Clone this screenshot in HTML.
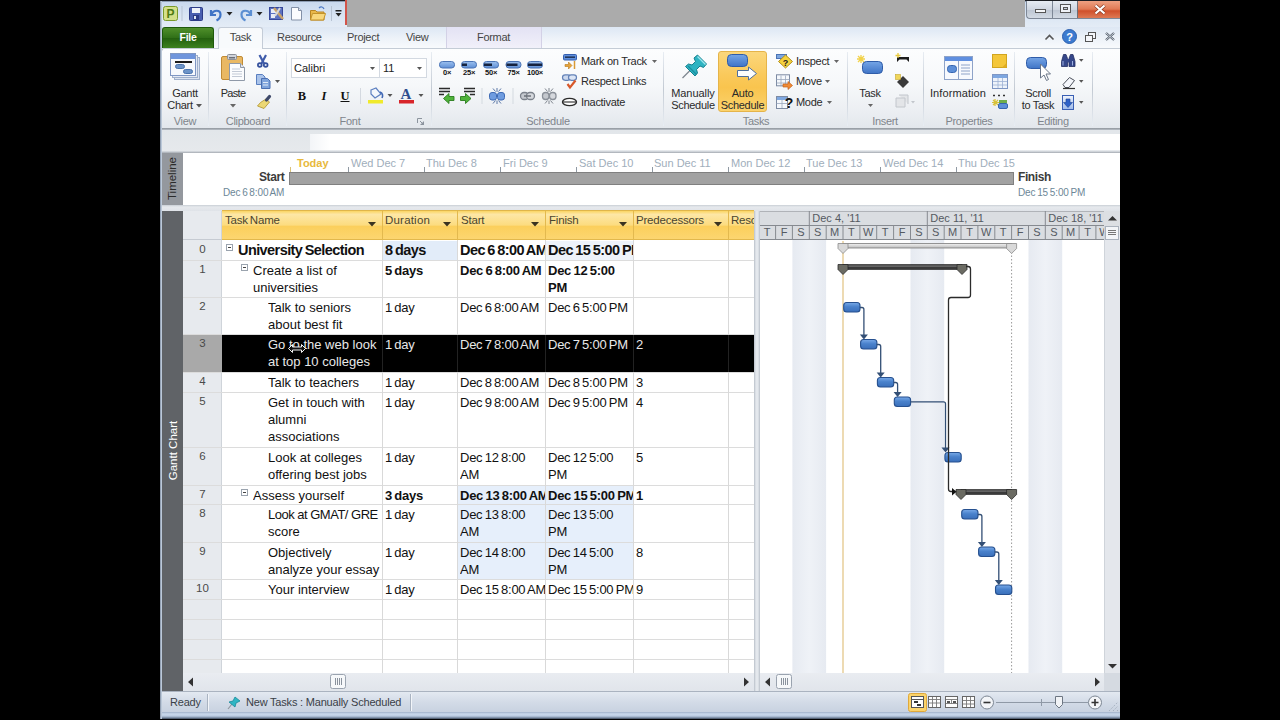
<!DOCTYPE html>
<html><head><meta charset="utf-8"><title>Microsoft Project</title>
<style>
*{box-sizing:border-box;margin:0;padding:0}
html,body{width:1280px;height:720px;overflow:hidden;background:#000}
body{position:relative;font-family:"Liberation Sans",sans-serif;font-size:11.5px;color:#222}
.a{position:absolute}
.t{position:absolute;white-space:nowrap;line-height:1}
/* ribbon text */
.rt{position:absolute;white-space:nowrap;line-height:13px;font-size:11px;letter-spacing:-0.3px;color:#2a2a2a;text-align:center}
.gl{position:absolute;white-space:nowrap;line-height:13px;font-size:11px;letter-spacing:-0.3px;color:#7f858c;text-align:center;top:115px}
.gs{position:absolute;top:52px;width:1px;height:74px;background:linear-gradient(#e8edf3,#c3cad3 50%,#e8edf3)}
/* grid */
.g{position:absolute;white-space:nowrap;font-size:13px;line-height:17px;color:#111;overflow:hidden}
.b{font-weight:bold}
.d{word-spacing:-1px;letter-spacing:-0.25px}
.d.b{letter-spacing:-0.25px}
.rn{position:absolute;left:183px;width:39px;text-align:center;font-size:11.5px;color:#4a4a4a;line-height:14px}
.hl{position:absolute;left:183px;width:571px;height:1px;background:#dcdcdc}
.vl{position:absolute;top:240px;width:1px;height:433px;background:#d9d9d9}
.tl{position:absolute;top:167px;width:1px;height:5px;background:#8f99a3}
.tt{position:absolute;top:158px;white-space:nowrap;line-height:1;font-size:11px;color:#a0aebb}
</style></head><body>
<!-- app frame -->
<div class="a" id="app" style="left:160px;top:1px;width:960px;height:717px;background:#dfe6ef"></div>
<!-- title bar -->
<div class="a" style="left:160px;top:0;width:960px;height:2px;background:linear-gradient(#1a1d22 1px,#8d9db3 1px)"></div>
<div class="a" style="left:160px;top:2px;width:960px;height:25px;background:linear-gradient(#c9d9ee,#dbe6f4 60%,#e4ecf6)"></div>
<div class="a" style="left:160px;top:27px;width:960px;height:22px;background:linear-gradient(#dde7f4,#eef3f9 55%,#f9fbfd)"></div>
<div class="a" style="left:347px;top:0;width:678px;height:27px;background:#ababab"></div>
<div class="a" style="left:345px;top:0;width:2px;height:25px;background:#d2554b"></div>
<!-- QAT icons -->
<svg class="a" style="left:160px;top:1.300px" width="190" height="25" viewBox="160 2 190 25">
  <rect x="163.5" y="7.5" width="14" height="14" rx="2" fill="#d4e08a" stroke="#7a9a2c"/>
  <text x="170.5" y="19" font-family="Liberation Sans,sans-serif" font-size="12" font-weight="bold" fill="#4d7a12" text-anchor="middle">P</text>
  <rect x="181.5" y="7" width="1" height="15" fill="#b8c4d4"/>
  <!-- save -->
  <rect x="189.500" y="8.500" width="13" height="13" rx="1" fill="#4a5fb0" stroke="#2c3b86"/>
  <rect x="192" y="9" width="8" height="5" fill="#eef2fa"/>
  <rect x="193" y="16" width="6" height="5" fill="#2c3b86"/><rect x="194" y="17" width="2" height="3" fill="#dfe6f5"/>
  <!-- undo -->
  <path d="M211 11 l0 5 l5 0 M211.500 15.500 c2 -5 9 -5 9 0 c0 3 -2 5 -4 6" fill="none" stroke="#3f74c6" stroke-width="2.200"/>
  <path d="M226.500 13 h6 l-3 3.500z" fill="#222"/>
  <!-- redo -->
  <path d="M251 11 l0 5 l-5 0 M250.500 15.500 c-2 -5 -9 -5 -9 0 c0 3 2 5 4 6" fill="none" stroke="#5c8fd2" stroke-width="2.200"/>
  <path d="M256.500 13 h6 l-3 3.500z" fill="#222"/>
  <!-- project info -->
  <rect x="269.500" y="8.500" width="13" height="12" fill="#5d72c0" stroke="#36479a"/>
  <rect x="271" y="10" width="5" height="4" fill="#e8ecf7"/><rect x="271" y="15" width="4" height="4" fill="#e8ecf7"/>
  <path d="M274 9 l9 11" stroke="#c9a36b" stroke-width="2.500"/><path d="M280 9 l-5 8" stroke="#d8d8d8" stroke-width="2"/>
  <!-- new -->
  <path d="M291.500 8.500 h7 l3 3 v9.500 h-10z" fill="#fbfcfe" stroke="#8391a8"/><path d="M298.500 8.500 v3 h3" fill="#dfe5ee" stroke="#8391a8"/>
  <!-- open -->
  <path d="M310.500 11.500 h5 l1.500 1.500 h7 v8 h-13.500z" fill="#e9b84a" stroke="#b98522"/>
  <path d="M312.500 14.500 h13 l-2 6.500 h-13z" fill="#f8d77c" stroke="#c3932c"/>
  <path d="M319 9 c2 -2 4 -1 5 1" fill="none" stroke="#4c79c4" stroke-width="1.300"/>
  <rect x="331" y="7" width="1" height="15" fill="#b8c4d4"/>
  <rect x="335.500" y="11" width="6" height="1.500" fill="#222"/><path d="M335.500 14 h6 l-3 3.500z" fill="#222"/>
</svg>
<!-- window controls -->
<div class="a" style="left:1026px;top:1px;width:94px;height:18px;border:1px solid #7d8796;border-top:none;border-right:none;border-radius:0 0 0 4px;background:linear-gradient(#e6ebf2,#cfd6e1 50%,#bcc5d2 51%,#d3dae4);overflow:hidden">
  <div class="a" style="left:25px;top:0;width:1px;height:18px;background:#7d8796"></div>
  <div class="a" style="left:50px;top:0;width:1px;height:18px;background:#6d6f78"></div>
  <div class="a" style="left:51px;top:0;width:43px;height:18px;background:linear-gradient(#eea182,#e07a55 45%,#d0502b 55%,#e0805a)"></div>
  <div class="a" style="left:8px;top:8px;width:11px;height:4px;border:1px solid #555;background:#f4f6f9"></div>
  <div class="a" style="left:33px;top:3px;width:11px;height:9px;border:1px solid #555;background:#eef1f6"></div>
  <div class="a" style="left:36px;top:6px;width:5px;height:3px;border:1px solid #555;background:#c9d0dc"></div>
  <svg class="a" style="left:67px;top:3px" width="12" height="11" viewBox="0 0 12 11"><path d="M1.500 1.500 l9 8 M10.500 1.500 l-9 8" stroke="#8a3a22" stroke-width="3.600"/><path d="M1.500 1.500 l9 8 M10.500 1.500 l-9 8" stroke="#fff" stroke-width="2.200"/></svg>
</div>

<!-- tabs -->
<div class="a" style="left:446px;top:27px;width:96px;height:22px;background:linear-gradient(#e3e2f4,#f2f1fa);border-left:1px solid #d3d1e6;border-right:1px solid #d3d1e6"></div>
<div class="a" style="left:162px;top:27px;width:52px;height:21px;border-radius:3px 3px 0 0;background:linear-gradient(#4f8f2a,#2f6f17 50%,#24600f 51%,#3d8220);border:1px solid #1f5a0c;border-bottom:none"></div>
<div class="t" style="left:162px;width:52px;top:32px;text-align:center;font-weight:bold;font-size:10.500px;letter-spacing:-0.3px;color:#fff">File</div>
<div class="a" style="left:218px;top:27px;width:45px;height:22px;border-radius:3px 3px 0 0;background:#f8fafc;border:1px solid #c4ccd7;border-bottom:none"></div>
<div class="t" style="left:218px;width:45px;top:32px;text-align:center;font-size:11px;letter-spacing:-0.3px;color:#454545">Task</div>
<div class="t" style="left:277px;top:32px;font-size:11px;letter-spacing:-0.3px;color:#454545">Resource</div>
<div class="t" style="left:347px;top:32px;font-size:11px;letter-spacing:-0.3px;color:#454545">Project</div>
<div class="t" style="left:406px;top:32px;font-size:11px;letter-spacing:-0.3px;color:#454545">View</div>
<div class="t" style="left:477px;top:32px;font-size:11px;letter-spacing:-0.3px;color:#454545">Format</div>
<!-- help icons -->
<svg class="a" style="left:1040px;top:26px" width="80" height="22" viewBox="1040 27 80 22">
  <path d="M1045.500 40.500 l4 -4 l4 4" fill="none" stroke="#555" stroke-width="1.600"/>
  <circle cx="1069.500" cy="37.500" r="7" fill="#3c7bd0" stroke="#2a5fae"/>
  <text x="1069.500" y="42" font-family="Liberation Sans,sans-serif" font-size="11" font-weight="bold" fill="#fff" text-anchor="middle">?</text>
  <rect x="1088.500" y="33.500" width="7" height="6" fill="#f4f6fa" stroke="#555"/><rect x="1085.500" y="36.500" width="7" height="6" fill="#f4f6fa" stroke="#555"/>
  <path d="M1106 34 l8 7 M1114 34 l-8 7" stroke="#4b5563" stroke-width="2.200"/><path d="M1106 34 l8 7 M1114 34 l-8 7" stroke="#eef2f7" stroke-width="0.800"/>
</svg>

<!-- ribbon body -->
<div class="a" style="left:161px;top:48px;width:959px;height:80px;background:linear-gradient(#fcfdfe,#f6f8fa 45%,#ebeef2 80%,#e3e7ec);border:1px solid #c4ccd6;border-left:1.500px solid #6f757d;border-right:none;border-bottom:none;border-radius:3px 0 0 0"></div>
<div class="a" style="left:219px;top:48px;width:43px;height:2px;background:#fafbfd"></div>
<div class="a" style="left:161px;top:128px;width:959px;height:2px;background:linear-gradient(#8f959c,#b9bfc7)"></div>
<!-- group separators -->
<div class="gs" style="left:208px"></div><div class="gs" style="left:286px"></div><div class="gs" style="left:431px"></div>
<div class="gs" style="left:663px"></div><div class="gs" style="left:847px"></div><div class="gs" style="left:923px"></div>
<div class="gs" style="left:1014px"></div><div class="gs" style="left:1092px"></div>
<!-- group labels -->
<div class="gl" style="left:165px;width:40px">View</div>
<div class="gl" style="left:212px;width:72px">Clipboard</div>
<div class="gl" style="left:320px;width:60px">Font</div>
<div class="gl" style="left:508px;width:80px">Schedule</div>
<div class="gl" style="left:726px;width:60px">Tasks</div>
<div class="gl" style="left:855px;width:60px">Insert</div>
<div class="gl" style="left:934px;width:70px">Properties</div>
<div class="gl" style="left:1023px;width:60px">Editing</div>
<svg class="a" style="left:417px;top:118px" width="8" height="8" viewBox="0 0 8 8"><path d="M0.500 5 v-4.500 h4.500" fill="none" stroke="#8c949e"/><path d="M3 7 h4 v-4z" fill="#8c949e"/><path d="M3 3 l3 3" stroke="#8c949e"/></svg>

<!-- View: Gantt Chart -->
<svg class="a" style="left:168px;top:52px" width="34" height="30" viewBox="0 0 34 30">
  <rect x="6.500" y="5.500" width="25" height="22" fill="#dbe3f0" stroke="#9fb0cc"/>
  <rect x="4.500" y="3.500" width="25" height="22" fill="#e4eaf4" stroke="#9fb0cc"/>
  <rect x="2.500" y="1.500" width="25" height="22" fill="#f6f9fd" stroke="#7f97c4"/>
  <rect x="3" y="2" width="24" height="5" fill="#6f95dc"/>
  <rect x="7" y="9" width="17" height="2" fill="#1c1c1c"/>
  <rect x="7.500" y="12.500" width="9" height="4" rx="2" fill="#6c94c9" stroke="#4a73ad"/>
  <rect x="15.500" y="17.500" width="9" height="4" rx="2" fill="#6c94c9" stroke="#4a73ad"/>
</svg>
<div class="rt" style="left:165px;width:40px;top:87px">Gantt</div>
<div class="rt" style="left:160px;width:40px;top:99px">Chart</div>
<svg class="a" style="left:196px;top:104px" width="6" height="4"><path d="M0 0 h6 l-3 3.500z" fill="#555"/></svg>

<!-- Clipboard -->
<svg class="a" style="left:219px;top:52px" width="30" height="32" viewBox="0 0 30 32">
  <rect x="2.500" y="4.500" width="21" height="23" rx="1.500" fill="#e9b863" stroke="#c08b36"/>
  <rect x="8.500" y="2.500" width="9" height="5" rx="1" fill="#cfd3da" stroke="#8c9099"/>
  <rect x="10" y="5" width="6" height="1.500" fill="#6b6f78"/>
  <path d="M10.500 11.500 h11 l4 4 v13 h-15z" fill="#fbfcfe" stroke="#8f99a8"/>
  <path d="M21.500 11.500 v4 h4" fill="#e1e6ee" stroke="#8f99a8"/>
  <path d="M13 17 h8 M13 19.500 h10 M13 22 h10 M13 24.500 h10" stroke="#c3cad6" stroke-width="1"/>
</svg>
<div class="rt" style="left:213px;width:40px;top:87px;letter-spacing:-0.7px">Paste</div>
<svg class="a" style="left:230px;top:104px" width="6" height="4"><path d="M0 0 h6 l-3 3.500z" fill="#666"/></svg>
<svg class="a" style="left:255px;top:53px" width="28" height="58" viewBox="255 53 28 58">
  <!-- cut -->
  <path d="M259.500 55 l4.500 8.500 M266 55 l-4.500 8.500" stroke="#3f5cab" stroke-width="2.200" fill="none"/>
  <circle cx="259.800" cy="65" r="1.900" fill="#dfe6f6" stroke="#34509c" stroke-width="1.700"/><circle cx="265.700" cy="65" r="1.900" fill="#dfe6f6" stroke="#34509c" stroke-width="1.700"/>
  <!-- copy -->
  <path d="M256.500 74.500 h6 l2.500 2.500 v7.500 h-8.500z" fill="#a9c3ea" stroke="#5a7fc0"/>
  <path d="M261.500 78.500 h6 l2.500 2.500 v7.500 h-8.500z" fill="#7fa4dc" stroke="#4a6fb2"/>
  <path d="M263 82.500 h5 M263 85 h5" stroke="#dfe9f8" stroke-width="1"/>
  <path d="M275 80 h5 l-2.500 3z" fill="#555"/>
  <!-- format painter -->
  <path d="M266 99 l3.500 3 l-5.500 6.500 l-6.500 -2.500 l3 -3.500z" fill="#ecd875" stroke="#b59a35" stroke-width="0.900"/>
  <path d="M266.500 100 l3 -3.500" stroke="#3f4a6a" stroke-width="3.200" stroke-linecap="round"/>
</svg>

<!-- Font group -->
<div class="a" style="left:291px;top:58px;width:89px;height:20px;background:#fff;border:1px solid #d3d9e1"></div>
<div class="a" style="left:379px;top:58px;width:48px;height:20px;background:#fff;border:1px solid #d3d9e1"></div>
<div class="t" style="left:294px;top:63px;font-size:11px;color:#222">Calibri</div>
<div class="t" style="left:383px;top:63px;font-size:11px;color:#222">11</div>
<svg class="a" style="left:370px;top:67px" width="6" height="4"><path d="M0 0 h5 l-2.500 3z" fill="#555"/></svg>
<svg class="a" style="left:417px;top:67px" width="6" height="4"><path d="M0 0 h5 l-2.500 3z" fill="#555"/></svg>
<div class="t" style="left:296px;top:89.500px;width:12px;text-align:center;font-family:'Liberation Serif',serif;font-weight:bold;font-size:12.500px;color:#111">B</div>
<div class="t" style="left:318px;top:89.500px;width:12px;text-align:center;font-family:'Liberation Serif',serif;font-weight:bold;font-style:italic;font-size:12.500px;color:#111">I</div>
<div class="t" style="left:339px;top:89.500px;width:12px;text-align:center;font-family:'Liberation Serif',serif;font-weight:bold;font-size:12.500px;color:#111;text-decoration:underline">U</div>
<div class="a" style="left:360px;top:88px;width:1px;height:16px;background:#d4d9e0"></div>
<svg class="a" style="left:366px;top:86px" width="62" height="20" viewBox="366 86 62 20">
  <path d="M371 90 l5 -2 l5 6 l-6 4 l-4 -4z" fill="#f4f7fc" stroke="#5c7fc0" stroke-width="1.200"/>
  <path d="M380 92 c3 1 3 4 2 6" fill="none" stroke="#3f66b4" stroke-width="1.600"/>
  <rect x="368" y="100" width="15" height="3.500" fill="#f0ea2c"/>
  <path d="M387.500 94 h5 l-2.500 3z" fill="#555"/>
  <text x="406" y="99" font-family="Liberation Serif,serif" font-size="15" font-weight="bold" fill="#2f4e8e" text-anchor="middle">A</text>
  <rect x="399" y="100" width="15" height="3.500" fill="#d8252a"/>
  <path d="M418.500 94 h5 l-2.500 3z" fill="#555"/>
</svg>
<!-- Schedule group -->
<svg class="a" style="left:436px;top:52px" width="124" height="58" viewBox="436 52 124 58">
  <defs><linearGradient id="pb" x1="0" y1="0" x2="0" y2="1"><stop offset="0" stop-color="#9cc0ee"/><stop offset="1" stop-color="#5f8fd6"/></linearGradient></defs>
  <g font-family="Liberation Sans,sans-serif" font-size="7.5" font-weight="bold" fill="#111" text-anchor="middle" letter-spacing="-0.2">
    <rect x="439.5" y="61.5" width="15" height="6.5" rx="3" fill="url(#pb)" stroke="#4a73b5"/>
    <text x="447" y="74.800">0×</text>
    <rect x="461.5" y="61.5" width="15" height="6.5" rx="3" fill="url(#pb)" stroke="#4a73b5"/><rect x="462" y="63.500" width="5" height="2.500" fill="#16233f"/>
    <text x="469" y="74.800">25×</text>
    <rect x="483.5" y="61.5" width="15" height="6.5" rx="3" fill="url(#pb)" stroke="#4a73b5"/><rect x="484" y="63.500" width="8" height="2.500" fill="#16233f"/>
    <text x="491" y="74.800">50×</text>
    <rect x="506" y="61.5" width="15" height="6.5" rx="3" fill="url(#pb)" stroke="#4a73b5"/><rect x="506.500" y="63.500" width="11" height="2.500" fill="#16233f"/>
    <text x="513.500" y="74.800">75×</text>
    <rect x="527.5" y="61.5" width="15" height="6.5" rx="3" fill="url(#pb)" stroke="#4a73b5"/><rect x="528" y="63.500" width="14" height="2.500" fill="#16233f"/>
    <text x="535" y="74.800">100×</text>
  </g>
  <!-- outdent -->
  <path d="M439 88.500 h11 M439 91.500 h11 M439 94.500 h5" stroke="#2b2b2b" stroke-width="1.300"/>
  <path d="M443.500 98.500 l5.500 -5 v3 h5 v4 h-5 v3z" fill="#4fb33a" stroke="#2a7d1e" stroke-width="0.900"/>
  <!-- indent -->
  <path d="M464 88.500 h11 M464 91.500 h11 M470 94.500 h5" stroke="#2b2b2b" stroke-width="1.300"/>
  <path d="M471 98.500 l-5.500 -5 v3 h-5 v4 h5 v3z" fill="#4fb33a" stroke="#2a7d1e" stroke-width="0.900"/>
  <rect x="481.500" y="88" width="1" height="16" fill="#d4d9e0"/>
  <!-- split -->
  <rect x="489.500" y="92.500" width="7" height="7.500" rx="2.500" fill="#6f9ce0" stroke="#3f6bb5"/><rect x="497.500" y="92.500" width="7" height="7.500" rx="2.500" fill="#6f9ce0" stroke="#3f6bb5"/>
  <path d="M497 88 v4 M493 88.500 l2.500 3 M501 88.500 l-2.500 3 M497 104 v-3.500 M493 103.500 l2.500 -3 M501 103.500 l-2.500 -3" stroke="#5b77a6" stroke-width="1"/>
  <rect x="512.500" y="88" width="1" height="16" fill="#d4d9e0"/>
  <!-- link -->
  <rect x="520.500" y="92.500" width="8" height="7" rx="3.500" fill="#c4c8ce" stroke="#7c828c" stroke-width="1.300"/><rect x="526.500" y="92.500" width="8" height="7" rx="3.500" fill="#d5d8dd" stroke="#7c828c" stroke-width="1.300"/>
  <path d="M524 96 h7" stroke="#6b7079" stroke-width="1.500"/>
  <!-- unlink -->
  <rect x="542.500" y="92.500" width="6.500" height="7" rx="3" fill="#c4c8ce" stroke="#8a9099" stroke-width="1.300"/><rect x="549.500" y="92.500" width="6.500" height="7" rx="3" fill="#d5d8dd" stroke="#8a9099" stroke-width="1.300"/>
  <path d="M549 88 v4 M545 88.500 l2.500 3 M553 88.500 l-2.500 3 M549 104 v-3.500 M545 103.500 l2.500 -3 M553 103.500 l-2.500 -3" stroke="#7f858e" stroke-width="1"/>
</svg>
<svg class="a" style="left:561px;top:52px" width="18" height="58" viewBox="561 52 18 58">
  <rect x="563.500" y="54.500" width="13" height="5.500" rx="1" fill="#5f8fdc" stroke="#345fb0"/><rect x="565" y="56.500" width="10" height="1.300" fill="#16233f"/>
  <path d="M565 64.500 h3.500 v-2.500 l3.500 3.500 l-3.500 3.500 v-2.500 h-3.500z" fill="#e8a33a" stroke="#b67718" stroke-width="0.600"/><path d="M574.500 61 v8" stroke="#d99a36" stroke-width="1.500"/>
  <rect x="562.500" y="74.800" width="8" height="5.500" rx="2.700" fill="#cbd8ee" stroke="#6483b8" stroke-width="1.200"/><rect x="568.500" y="74.800" width="8" height="5.500" rx="2.700" fill="#dbe5f5" stroke="#6483b8" stroke-width="1.200"/>
  <path d="M567.500 84 l2.500 3.500 l5.500 -7" fill="none" stroke="#d8582a" stroke-width="2.200"/>
  <ellipse cx="569.500" cy="102" rx="7" ry="3.600" fill="#fff" stroke="#2b2b2b" stroke-width="1.400"/><path d="M562.500 102 h14" stroke="#2b2b2b" stroke-width="1.100"/>
</svg>
<div class="rt" style="left:581px;top:55px;text-align:left">Mark on Track</div>
<svg class="a" style="left:652px;top:60px" width="6" height="4"><path d="M0 0 h5 l-2.500 3z" fill="#666"/></svg>
<div class="rt" style="left:581px;top:75px;text-align:left">Respect Links</div>
<div class="rt" style="left:581px;top:96px;text-align:left">Inactivate</div>

<!-- Tasks group -->
<svg class="a" style="left:678px;top:52px" width="32" height="32" viewBox="678 52 32 32">
  <path d="M682.500 78 l9 -9" stroke="#7f878f" stroke-width="1.300"/>
  <path d="M685.500 66.500 l3 -2.500 l3.500 1 l3.500 -3.500 l-1.500 -3.500 l3.500 -3 l9 9 l-3 3.500 l-3.500 -1.500 l-3.500 3.500 l1 3.500 l-2.500 3z" fill="#2eb3c2" stroke="#15808e" stroke-width="1"/>
  <path d="M697.500 56.500 l8 8" stroke="#9be6ec" stroke-width="1.300" fill="none"/>
  <path d="M688 66 l8.500 8.500" stroke="#1a8f9e" stroke-width="1.200" fill="none"/>
</svg>
<div class="rt" style="left:668px;width:50px;top:87px;letter-spacing:-0.05px">Manually</div>
<div class="rt" style="left:668px;width:50px;top:98.500px">Schedule</div>
<div class="a" style="left:718px;top:51px;width:49px;height:61px;border:1px solid #e5b44a;border-radius:3px;background:linear-gradient(#fbd77c,#fac95a 40%,#f9c44e 60%,#fbd36d)"></div>
<svg class="a" style="left:724px;top:52px" width="38" height="32" viewBox="724 52 38 32"><defs><linearGradient id="pb2" x1="0" y1="0" x2="0" y2="1"><stop offset="0" stop-color="#75a5e6"/><stop offset="1" stop-color="#3f74c6"/></linearGradient></defs>
  <rect x="727.500" y="54.500" width="20" height="12" rx="4" fill="url(#pb2)" stroke="#2f5ca8"/>
  <path d="M737.500 70.500 h11 v-3.500 l8 6.500 l-8 6.500 v-3.500 h-11z" fill="#fdfdfd" stroke="#4f6f9c"/>
</svg>
<div class="rt" style="left:718px;width:49px;top:87px">Auto</div>
<div class="rt" style="left:718px;width:49px;top:98.500px">Schedule</div>
<svg class="a" style="left:774px;top:52px" width="22" height="58" viewBox="774 52 22 58">
  <rect x="776.500" y="54.500" width="10" height="4" fill="#7ea7e0" stroke="#4a73b5"/>
  <path d="M785.500 55 l7 6.500 l-7 6.500 l-7 -6.500z" fill="#f5d13d" stroke="#b3901c"/>
  <text x="785.500" y="65.500" font-family="Liberation Sans,sans-serif" font-size="9" font-weight="bold" fill="#222" text-anchor="middle">?</text>
  <rect x="776.500" y="74.800" width="13" height="11" fill="#f5f8fc" stroke="#7d8ba3"/><path d="M776.500 79.500 h13 M776.500 83 h13 M781 75.500 v11 M785.500 75.500 v11" stroke="#9aa7bd" stroke-width="0.800"/>
  <path d="M783 84 h5 v-2.500 l4.500 4 l-4.500 4 v-2.500 h-5z" fill="#ef8a35" stroke="#c3601a" stroke-width="0.700"/>
  <rect x="776.500" y="96.500" width="11" height="12" fill="#f5f8fc" stroke="#7d8ba3"/><rect x="777" y="97" width="10" height="3" fill="#7ea7e0"/><path d="M776.500 103.500 h11 M782 100 v8" stroke="#9aa7bd" stroke-width="0.800"/>
  <text x="789" y="108" font-family="Liberation Sans,sans-serif" font-size="14" font-weight="bold" fill="#111" text-anchor="middle">?</text>
</svg>
<div class="rt" style="left:796px;top:55px;text-align:left">Inspect</div>
<svg class="a" style="left:834px;top:60px" width="6" height="4"><path d="M0 0 h5 l-2.500 3z" fill="#666"/></svg>
<div class="rt" style="left:796px;top:75px;text-align:left">Move</div>
<svg class="a" style="left:825px;top:80px" width="6" height="4"><path d="M0 0 h5 l-2.500 3z" fill="#666"/></svg>
<div class="rt" style="left:796px;top:96px;text-align:left">Mode</div>
<svg class="a" style="left:827px;top:101px" width="6" height="4"><path d="M0 0 h5 l-2.500 3z" fill="#666"/></svg>

<!-- Insert group -->
<svg class="a" style="left:854px;top:52px" width="64" height="58" viewBox="854 52 64 58">
  <rect x="862.500" y="61.500" width="20" height="12" rx="4" fill="url(#pb2)" stroke="#2f5ca8"/>
  <path d="M861 55 v8 M857 59 h8 M858 56 l6 6 M864 56 l-6 6" stroke="#f2d24a" stroke-width="1.300"/>
  <!-- summary -->
  <path d="M897 57 h12 v5 l-2.500 -2.500 h-7 l-2.500 2.500z" fill="#1c1c1c"/><path d="M898 53 v5 M895.500 55.500 h5" stroke="#e8c93c" stroke-width="1.300"/>
  <!-- milestone -->
  <path d="M903 76 l6 6 l-6 6 l-6 -6z" fill="#3a3a3a"/><rect x="895.500" y="74.500" width="5" height="5" fill="#f0d65a" stroke="#c6a82e" stroke-width="0.600"/>
  <!-- deliverable -->
  <path d="M896 98 h9 v9 h-9z M899 95 h9 v9" fill="#e3e5e8" stroke="#c2c6cc"/>
  <path d="M911 101 h4 l-2 2.500z" fill="#c2c6cc"/>
</svg>
<div class="rt" style="left:850px;width:40px;top:87px">Task</div>
<svg class="a" style="left:868px;top:104px" width="6" height="4"><path d="M0 0 h5 l-2.500 3z" fill="#666"/></svg>

<!-- Properties group -->
<svg class="a" style="left:940px;top:52px" width="72" height="60" viewBox="940 52 72 60">
  <rect x="944.500" y="56.500" width="28" height="23" fill="#f7f9fd" stroke="#8ea3c8"/>
  <rect x="945" y="57" width="27" height="4" fill="#5f8fe0"/>
  <rect x="947.500" y="65.500" width="9" height="7" rx="3" fill="#5d8fd8" stroke="#3565b0"/>
  <path d="M958.500 61 v18" stroke="#8ea3c8"/><path d="M961 65 h9 M961 68 h9 M961 71 h9 M961 74 h9" stroke="#8ea3c8" stroke-width="1"/>
  <!-- notes -->
  <rect x="992.500" y="54.500" width="14" height="13" fill="#f4c73a" stroke="#d1a520"/><path d="M1002 67.500 l4.500 -4.500 v4.500z" fill="#e0ae22"/>
  <!-- details -->
  <rect x="992.500" y="74.500" width="15" height="14" fill="#eef3fa" stroke="#7f97c4"/><rect x="993" y="75" width="14" height="3" fill="#7ea7e0"/>
  <path d="M993 81.500 h14 M993 85 h14 M998 78 v10 M1002.500 78 v10" stroke="#9db1d4" stroke-width="0.800"/>
  <!-- add to timeline -->
  <path d="M993 95.500 h2 M998 95.500 h2 M1003 95.500 h2" stroke="#333" stroke-width="1.600"/>
  <path d="M995 99 v7 M992 102.500 h7 M993 100 l5 5 M998 100 l-5 5" stroke="#d8c23a" stroke-width="1.200"/>
  <rect x="998.500" y="103.500" width="9" height="5" rx="1.500" fill="#5d8fd8" stroke="#3565b0"/>
  <path d="M999 100 h8 v3 h-8z" fill="#6fae4a"/>
</svg>
<div class="rt" style="left:928px;width:60px;top:87px;letter-spacing:0.1px">Information</div>

<!-- Editing group -->
<svg class="a" style="left:1020px;top:52px" width="70" height="60" viewBox="1020 52 70 60">
  <rect x="1026.500" y="57.500" width="20" height="11" rx="4" fill="url(#pb2)" stroke="#2f5ca8"/>
  <path d="M1040.500 64 v14 l3.500 -3 l2.500 5.500 l2 -1 l-2.500 -5.500 h4.500z" fill="#fff" stroke="#6a7688" stroke-width="1"/>
  <!-- binoculars -->
  <path d="M1063.500 54.500 h2.500 l1.500 4 v8 h-6 v-5z M1070.500 54.500 h2.500 l2 7 v5 h-6 v-8z" fill="#35478a" stroke="#232f63" stroke-width="0.800"/>
  <rect x="1066.500" y="59" width="3" height="3.500" fill="#35478a"/>
  <path d="M1063 61 v4.500 M1072.500 61 v4.500" stroke="#9fb0e0" stroke-width="1"/>
  <path d="M1079 59 h4.500 l-2.250 2.800z" fill="#555"/>
  <!-- eraser -->
  <path d="M1063 84.500 l6.500 -7 l5 3 l-5.500 7 h-4z" fill="#f4f6fb" stroke="#4a4f5a" stroke-width="1"/><path d="M1063 88.500 h12" stroke="#333" stroke-width="1.200"/>
  <path d="M1079 80 h4.500 l-2.250 2.800z" fill="#555"/>
  <!-- fill down -->
  <rect x="1062.500" y="95.500" width="11" height="14" fill="url(#fd)" stroke="#3a5fb4"/>
  <path d="M1066 99 h4 v3.500 h2.500 l-4.500 5 l-4.500 -5 h2.500z" fill="#2f62c8" stroke="#1f4596" stroke-width="0.600"/>
  <path d="M1079 101 h4.500 l-2.250 2.800z" fill="#555"/>
  <defs><linearGradient id="fd" x1="0" y1="0" x2="0" y2="1"><stop offset="0" stop-color="#f2f6fd"/><stop offset="1" stop-color="#9db9ea"/></linearGradient></defs>
</svg>
<div class="rt" style="left:1017px;width:42px;top:87px">Scroll</div>
<div class="rt" style="left:1017px;width:42px;top:98.500px">to Task</div>

<!-- entry bar strip -->
<div class="a" style="left:161px;top:130px;width:959px;height:22px;background:linear-gradient(#e2e6ea,#e6e9ec);border-left:1.500px solid #6f757d"></div>
<div class="a" style="left:310px;top:134px;width:810px;height:16px;background:linear-gradient(90deg,#f3f5f8,#fff 20px)"></div>
<div class="a" style="left:160px;top:151px;width:960px;height:2px;background:linear-gradient(#dfe3e8,#a4a9b0)"></div>
<!-- timeline -->
<div class="a" style="left:183px;top:153px;width:937px;height:52px;background:#fff"></div>
<div class="a" style="left:162px;top:153px;width:21px;height:52px;background:#94989e"></div>
<div class="t" style="left:147px;top:172px;width:52px;height:13px;text-align:center;font-size:11.500px;color:#2b2b2b;transform:rotate(-90deg)">Timeline</div>
<div class="a" style="left:160px;top:205px;width:960px;height:6px;background:linear-gradient(#c9ced5,#e6e9ed 2px,#dfe3e8)"></div>
<div class="t" style="left:297px;top:158px;font-size:11px;font-weight:bold;color:#e8b93c">Today</div>
<div class="a" style="left:290px;top:167px;width:1px;height:5px;background:#d9c27a"></div>
<div class="t" style="left:259px;top:171px;font-size:12px;font-weight:bold;color:#3c3c3c;letter-spacing:-0.4px">Start</div>
<div class="t" style="left:1018px;top:171px;font-size:12px;font-weight:bold;color:#3c3c3c;letter-spacing:-0.4px">Finish</div>
<div class="t" style="left:223px;top:188px;font-size:10px;word-spacing:-1px;letter-spacing:-0.1px;color:#6d8797">Dec 6 8:00 AM</div>
<div class="t" style="left:1018px;top:188px;font-size:10px;word-spacing:-1px;letter-spacing:-0.1px;color:#6d8797">Dec 15 5:00 PM</div>
<div class="a" style="left:289px;top:172px;width:725px;height:13px;background:#a2a2a2;border:1px solid #808080"></div>
<div class="tl" style="left:348px"></div><div class="tt" style="left:351px">Wed Dec 7</div>
<div class="tl" style="left:424px"></div><div class="tt" style="left:426px">Thu Dec 8</div>
<div class="tl" style="left:500px"></div><div class="tt" style="left:503px">Fri Dec 9</div>
<div class="tl" style="left:576px"></div><div class="tt" style="left:579px">Sat Dec 10</div>
<div class="tl" style="left:652px"></div><div class="tt" style="left:654px">Sun Dec 11</div>
<div class="tl" style="left:728px"></div><div class="tt" style="left:731px">Mon Dec 12</div>
<div class="tl" style="left:804px"></div><div class="tt" style="left:806px">Tue Dec 13</div>
<div class="tl" style="left:880px"></div><div class="tt" style="left:883px">Wed Dec 14</div>
<div class="tl" style="left:956px"></div><div class="tt" style="left:958px">Thu Dec 15</div>

<!-- grid -->
<div class="a" style="left:162px;top:211px;width:21px;height:480px;background:#606367"></div>
<div class="t" style="left:133.500px;top:444px;width:80px;height:13px;text-align:center;font-size:11.500px;color:#fff;transform:rotate(-90deg)">Gantt Chart</div>
<div class="a" style="left:184px;top:211px;width:570px;height:462px;background:#fff"></div>
<div class="a" style="left:183px;top:211px;width:39px;height:462px;background:#e7eaee;border-right:1px solid #cfd4da"></div>
<div class="a" style="left:222px;top:210px;width:532px;height:30px;background:linear-gradient(#fbd563,#fde7a6 12%,#fcdc80 50%,#fbcf5c 55%,#fcd670);border-top:1px solid #e0b64a;border-bottom:1px solid #e2b84c"></div>
<div class="t" style="left:225px;top:214.500px;font-size:11.5px;letter-spacing:-0.2px;word-spacing:-1px;color:#4a4530">Task Name</div>
<div class="t" style="left:385px;top:214.500px;font-size:11.5px;letter-spacing:0.2px;word-spacing:-1px;color:#4a4530">Duration</div>
<div class="t" style="left:461px;top:214.500px;font-size:11.5px;letter-spacing:-0.2px;word-spacing:-1px;color:#4a4530">Start</div>
<div class="t" style="left:549px;top:214.500px;font-size:11.5px;letter-spacing:-0.2px;word-spacing:-1px;color:#4a4530">Finish</div>
<div class="t" style="left:636px;top:214.500px;font-size:11.5px;letter-spacing:-0.2px;word-spacing:-1px;color:#4a4530">Predecessors</div>
<div class="t" style="left:731px;top:214.500px;font-size:11.5px;letter-spacing:-0.2px;word-spacing:-1px;color:#4a4530">Reso</div>
<svg class="a" style="left:368px;top:222px" width="8" height="5"><path d="M0 0 h8 l-4 4.500z" fill="#3a3320"/></svg>
<svg class="a" style="left:443px;top:222px" width="8" height="5"><path d="M0 0 h8 l-4 4.500z" fill="#3a3320"/></svg>
<svg class="a" style="left:531px;top:222px" width="8" height="5"><path d="M0 0 h8 l-4 4.500z" fill="#3a3320"/></svg>
<svg class="a" style="left:619px;top:222px" width="8" height="5"><path d="M0 0 h8 l-4 4.500z" fill="#3a3320"/></svg>
<svg class="a" style="left:714px;top:222px" width="8" height="5"><path d="M0 0 h8 l-4 4.500z" fill="#3a3320"/></svg>
<div class="a" style="left:382px;top:211px;width:1px;height:29px;background:#e3b94e"></div>
<div class="a" style="left:457px;top:211px;width:1px;height:29px;background:#e3b94e"></div>
<div class="a" style="left:545px;top:211px;width:1px;height:29px;background:#e3b94e"></div>
<div class="a" style="left:633px;top:211px;width:1px;height:29px;background:#e3b94e"></div>
<div class="a" style="left:728px;top:211px;width:1px;height:29px;background:#e3b94e"></div>
<div class="a" style="left:183px;top:239px;width:39px;height:1px;background:#c6cbd2"></div>
<div class="a" style="left:383px;top:241px;width:74px;height:19px;background:#e2ecf9"></div>
<div class="a" style="left:546px;top:241px;width:87px;height:19px;background:#eef3fa"></div>
<div class="a" style="left:458px;top:486px;width:87px;height:93px;background:#e6effb"></div>
<div class="a" style="left:546px;top:486px;width:87px;height:93px;background:#e6effb"></div>
<div class="a" style="left:183px;top:334px;width:39px;height:39px;background:#a9a9a9"></div>
<div class="a" style="left:222px;top:334px;width:532px;height:39px;background:#000"></div>
<div class="hl" style="top:260px"></div>
<div class="hl" style="top:297px"></div>
<div class="hl" style="top:334px"></div>
<div class="hl" style="top:372px"></div>
<div class="hl" style="top:392px"></div>
<div class="hl" style="top:447px"></div>
<div class="hl" style="top:485px"></div>
<div class="hl" style="top:504px"></div>
<div class="hl" style="top:542px"></div>
<div class="hl" style="top:579px"></div>
<div class="hl" style="top:599px"></div>
<div class="hl" style="top:619px"></div>
<div class="hl" style="top:639px"></div>
<div class="hl" style="top:659px"></div>
<div class="vl" style="left:382px"></div>
<div class="vl" style="left:457px"></div>
<div class="vl" style="left:545px"></div>
<div class="vl" style="left:633px"></div>
<div class="vl" style="left:728px"></div>
<div class="a" style="left:382px;top:335px;width:1px;height:37px;background:#222"></div><div class="a" style="left:457px;top:335px;width:1px;height:37px;background:#222"></div><div class="a" style="left:545px;top:335px;width:1px;height:37px;background:#222"></div><div class="a" style="left:633px;top:335px;width:1px;height:37px;background:#222"></div><div class="a" style="left:728px;top:335px;width:1px;height:37px;background:#222"></div>
<div class="rn" style="top:242px">0</div>
<div class="a" style="left:226px;top:244px;width:7px;height:7px;border:1px solid #9aa3ae;background:#fff"><div class="a" style="left:1px;top:2px;width:3px;height:1px;background:#444"></div></div>
<div class="g b" style="left:238px;top:242px;width:144px;font-size:14.5px;letter-spacing:-0.58px;word-spacing:-1px;">University Selection</div>
<div class="g d b" style="left:385px;top:242px;width:72px;font-size:14.5px;letter-spacing:-0.58px;word-spacing:-1px;">8 days</div>
<div class="g d b" style="left:460px;top:242px;width:85px;font-size:14.5px;letter-spacing:-0.58px;word-spacing:-1px;">Dec 6 8:00 AM</div>
<div class="g d b" style="left:548px;top:242px;width:85px;font-size:14.5px;letter-spacing:-0.58px;word-spacing:-1px;">Dec 15 5:00 PM</div>
<div class="rn" style="top:262px">1</div>
<div class="a" style="left:241px;top:264px;width:7px;height:7px;border:1px solid #9aa3ae;background:#fff"><div class="a" style="left:1px;top:2px;width:3px;height:1px;background:#444"></div></div>
<div class="g" style="left:253px;top:262px;width:129px;">Create a list of<br>universities</div>
<div class="g d b" style="left:385px;top:262px;width:72px;">5 days</div>
<div class="g d b" style="left:460px;top:262px;width:85px;">Dec 6 8:00 AM</div>
<div class="g d b" style="left:548px;top:262px;width:85px;">Dec 12 5:00<br>PM</div>
<div class="rn" style="top:299px">2</div>
<div class="g" style="left:268px;top:299px;width:114px;">Talk to seniors<br>about best fit</div>
<div class="g d" style="left:385px;top:299px;width:72px;">1 day</div>
<div class="g d" style="left:460px;top:299px;width:85px;">Dec 6 8:00 AM</div>
<div class="g d" style="left:548px;top:299px;width:85px;">Dec 6 5:00 PM</div>
<div class="rn" style="top:336px">3</div>
<div class="g" style="left:268px;top:336px;width:114px;color:#e8e8e8;">Go to the web look<br>at top 10 colleges</div>
<div class="g d" style="left:385px;top:336px;width:72px;color:#e8e8e8;">1 day</div>
<div class="g d" style="left:460px;top:336px;width:85px;color:#e8e8e8;">Dec 7 8:00 AM</div>
<div class="g d" style="left:548px;top:336px;width:85px;color:#e8e8e8;">Dec 7 5:00 PM</div>
<div class="g" style="left:636px;top:336px;width:90px;color:#e8e8e8;">2</div>
<div class="rn" style="top:374px">4</div>
<div class="g" style="left:268px;top:374px;width:114px;">Talk to teachers</div>
<div class="g d" style="left:385px;top:374px;width:72px;">1 day</div>
<div class="g d" style="left:460px;top:374px;width:85px;">Dec 8 8:00 AM</div>
<div class="g d" style="left:548px;top:374px;width:85px;">Dec 8 5:00 PM</div>
<div class="g" style="left:636px;top:374px;width:90px;">3</div>
<div class="rn" style="top:394px">5</div>
<div class="g" style="left:268px;top:394px;width:114px;">Get in touch with<br>alumni<br>associations</div>
<div class="g d" style="left:385px;top:394px;width:72px;">1 day</div>
<div class="g d" style="left:460px;top:394px;width:85px;">Dec 9 8:00 AM</div>
<div class="g d" style="left:548px;top:394px;width:85px;">Dec 9 5:00 PM</div>
<div class="g" style="left:636px;top:394px;width:90px;">4</div>
<div class="rn" style="top:449px">6</div>
<div class="g" style="left:268px;top:449px;width:114px;">Look at colleges<br>offering best jobs</div>
<div class="g d" style="left:385px;top:449px;width:72px;">1 day</div>
<div class="g d" style="left:460px;top:449px;width:85px;">Dec 12 8:00<br>AM</div>
<div class="g d" style="left:548px;top:449px;width:85px;">Dec 12 5:00<br>PM</div>
<div class="g" style="left:636px;top:449px;width:90px;">5</div>
<div class="rn" style="top:487px">7</div>
<div class="a" style="left:241px;top:489px;width:7px;height:7px;border:1px solid #9aa3ae;background:#fff"><div class="a" style="left:1px;top:2px;width:3px;height:1px;background:#444"></div></div>
<div class="g" style="left:253px;top:487px;width:129px;">Assess yourself</div>
<div class="g d b" style="left:385px;top:487px;width:72px;">3 days</div>
<div class="g d b" style="left:460px;top:487px;width:85px;">Dec 13 8:00 AM</div>
<div class="g d b" style="left:548px;top:487px;width:85px;">Dec 15 5:00 PM</div>
<div class="g b" style="left:636px;top:487px;width:90px;">1</div>
<div class="rn" style="top:506px">8</div>
<div class="g" style="left:268px;top:506px;width:114px;"><span style="letter-spacing:-0.5px">Look at GMAT/ GRE</span><br>score</div>
<div class="g d" style="left:385px;top:506px;width:72px;">1 day</div>
<div class="g d" style="left:460px;top:506px;width:85px;">Dec 13 8:00<br>AM</div>
<div class="g d" style="left:548px;top:506px;width:85px;">Dec 13 5:00<br>PM</div>
<div class="rn" style="top:544px">9</div>
<div class="g" style="left:268px;top:544px;width:114px;">Objectively<br>analyze your essay</div>
<div class="g d" style="left:385px;top:544px;width:72px;">1 day</div>
<div class="g d" style="left:460px;top:544px;width:85px;">Dec 14 8:00<br>AM</div>
<div class="g d" style="left:548px;top:544px;width:85px;">Dec 14 5:00<br>PM</div>
<div class="g" style="left:636px;top:544px;width:90px;">8</div>
<div class="rn" style="top:581px">10</div>
<div class="g" style="left:268px;top:581px;width:114px;">Your interview</div>
<div class="g d" style="left:385px;top:581px;width:72px;">1 day</div>
<div class="g d" style="left:460px;top:581px;width:85px;">Dec 15 8:00 AM</div>
<div class="g d" style="left:548px;top:581px;width:85px;">Dec 15 5:00 PM</div>
<div class="g" style="left:636px;top:581px;width:90px;">9</div>
<svg class="a" style="left:287px;top:343px" width="20" height="11" viewBox="0 0 20 11"><path d="M1.500 5.500 l4 -4 v2.500 h9 v-2.500 l4 4 l-4 4 v-2.500 h-9 v2.500z" fill="#111" stroke="#f2f2f2" stroke-width="1"/></svg>
<div class="a" style="left:754px;top:211px;width:6px;height:480px;background:linear-gradient(90deg,#b9c0c9,#e4e8ed 2px,#e4e8ed 4px,#b9c0c9)"></div>

<!-- gantt chart -->
<svg class="a" style="left:760px;top:211px" width="344" height="462" viewBox="760 211 344 462" font-family="Liberation Sans,sans-serif">
<defs><linearGradient id="bb" x1="0" y1="0" x2="0" y2="1"><stop offset="0" stop-color="#79aae8"/><stop offset="0.45" stop-color="#4a82cc"/><stop offset="1" stop-color="#3a6fba"/></linearGradient>
<linearGradient id="we" x1="0" y1="0" x2="1" y2="0"><stop offset="0" stop-color="#e6eaf1"/><stop offset="0.5" stop-color="#eff2f7"/><stop offset="1" stop-color="#e6eaf1"/></linearGradient>
<linearGradient id="pg" x1="0" y1="0" x2="0" y2="1"><stop offset="0" stop-color="#f2f2f2"/><stop offset="1" stop-color="#bdbdbd"/></linearGradient></defs>
<rect x="760" y="211" width="346" height="462" fill="#fff"/>
<rect x="792.4" y="239.500" width="33.7" height="433.500" fill="url(#we)"/>
<rect x="910.5" y="239.500" width="33.7" height="433.500" fill="url(#we)"/>
<rect x="1028.5" y="239.500" width="33.7" height="433.500" fill="url(#we)"/>
<rect x="760" y="211" width="346" height="28.500" fill="#dadde1"/>
<path d="M760 211 h346 M760 225.500 h346 M760 239.500 h346" stroke="#868a90" stroke-width="1" fill="none"/>
<path d="M809.3 211 v14" stroke="#868a90"/>
<text x="812.3" y="222.300" font-size="11" fill="#555a61">Dec 4, '11</text>
<path d="M927.3 211 v14" stroke="#868a90"/>
<text x="930.3" y="222.300" font-size="11" fill="#555a61">Dec 11, '11</text>
<path d="M1045.3 211 v14" stroke="#868a90"/>
<text x="1048.3" y="222.300" font-size="11" fill="#555a61">Dec 18, '11</text>
<text x="767.1" y="236.300" font-size="11" fill="#555a61" text-anchor="middle">T</text>
<path d="M775.6 226 v13" stroke="#868a90"/>
<text x="784.0" y="236.300" font-size="11" fill="#555a61" text-anchor="middle">F</text>
<path d="M792.4 226 v13" stroke="#868a90"/>
<text x="800.9" y="236.300" font-size="11" fill="#555a61" text-anchor="middle">S</text>
<path d="M809.3 226 v13" stroke="#868a90"/>
<text x="817.7" y="236.300" font-size="11" fill="#555a61" text-anchor="middle">S</text>
<path d="M826.2 226 v13" stroke="#868a90"/>
<text x="834.6" y="236.300" font-size="11" fill="#555a61" text-anchor="middle">M</text>
<path d="M843.0 226 v13" stroke="#868a90"/>
<text x="851.4" y="236.300" font-size="11" fill="#555a61" text-anchor="middle">T</text>
<path d="M859.9 226 v13" stroke="#868a90"/>
<text x="868.3" y="236.300" font-size="11" fill="#555a61" text-anchor="middle">W</text>
<path d="M876.7 226 v13" stroke="#868a90"/>
<text x="885.2" y="236.300" font-size="11" fill="#555a61" text-anchor="middle">T</text>
<path d="M893.6 226 v13" stroke="#868a90"/>
<text x="902.0" y="236.300" font-size="11" fill="#555a61" text-anchor="middle">F</text>
<path d="M910.5 226 v13" stroke="#868a90"/>
<text x="918.9" y="236.300" font-size="11" fill="#555a61" text-anchor="middle">S</text>
<path d="M927.3 226 v13" stroke="#868a90"/>
<text x="935.7" y="236.300" font-size="11" fill="#555a61" text-anchor="middle">S</text>
<path d="M944.2 226 v13" stroke="#868a90"/>
<text x="952.6" y="236.300" font-size="11" fill="#555a61" text-anchor="middle">M</text>
<path d="M961.0 226 v13" stroke="#868a90"/>
<text x="969.5" y="236.300" font-size="11" fill="#555a61" text-anchor="middle">T</text>
<path d="M977.9 226 v13" stroke="#868a90"/>
<text x="986.3" y="236.300" font-size="11" fill="#555a61" text-anchor="middle">W</text>
<path d="M994.8 226 v13" stroke="#868a90"/>
<text x="1003.2" y="236.300" font-size="11" fill="#555a61" text-anchor="middle">T</text>
<path d="M1011.6 226 v13" stroke="#868a90"/>
<text x="1020.0" y="236.300" font-size="11" fill="#555a61" text-anchor="middle">F</text>
<path d="M1028.5 226 v13" stroke="#868a90"/>
<text x="1036.9" y="236.300" font-size="11" fill="#555a61" text-anchor="middle">S</text>
<path d="M1045.3 226 v13" stroke="#868a90"/>
<text x="1053.8" y="236.300" font-size="11" fill="#555a61" text-anchor="middle">S</text>
<path d="M1062.2 226 v13" stroke="#868a90"/>
<text x="1070.6" y="236.300" font-size="11" fill="#555a61" text-anchor="middle">M</text>
<path d="M1079.1 226 v13" stroke="#868a90"/>
<text x="1087.5" y="236.300" font-size="11" fill="#555a61" text-anchor="middle">T</text>
<path d="M1095.9 226 v13" stroke="#868a90"/>
<text x="1104.4" y="236.300" font-size="11" fill="#555a61" text-anchor="middle">W</text>
<path d="M843.0 241 v432" stroke="#e3c78a" stroke-width="1.300"/>
<path d="M1011.6 252 v421" stroke="#9a9a9a" stroke-width="1" stroke-dasharray="1.500 2"/>
<rect x="843.0" y="243.500" width="168.6" height="4.500" fill="url(#pg)" stroke="#7c7c7c" stroke-width="0.800"/>
<path d="M838.0 243.500 h10 v5 l-5 5 l-5 -5z" fill="#d9d9d9" stroke="#8a8a8a" stroke-width="0.800"/>
<path d="M1006.6 243.500 h10 v5 l-5 5 l-5 -5z" fill="#d9d9d9" stroke="#8a8a8a" stroke-width="0.800"/>
<rect x="843.0" y="264.5" width="119.0" height="5" fill="#3a3a3a" stroke="#1f1f1f" stroke-width="0.600"/>
<rect x="843.0" y="265.5" width="119.0" height="1.200" fill="#777"/>
<path d="M838.0 264.5 h10 v5 l-5 5 l-5 -5z" fill="#6b6b63" stroke="#2a2a2a" stroke-width="0.800"/>
<path d="M957.0 264.5 h10 v5 l-5 5 l-5 -5z" fill="#6b6b63" stroke="#2a2a2a" stroke-width="0.800"/>
<rect x="961.0" y="489.5" width="50.6" height="5" fill="#3a3a3a" stroke="#1f1f1f" stroke-width="0.600"/>
<rect x="961.0" y="490.5" width="50.6" height="1.200" fill="#777"/>
<path d="M956.0 489.5 h10 v5 l-5 5 l-5 -5z" fill="#6b6b63" stroke="#2a2a2a" stroke-width="0.800"/>
<path d="M1006.6 489.5 h10 v5 l-5 5 l-5 -5z" fill="#6b6b63" stroke="#2a2a2a" stroke-width="0.800"/>
<rect x="843.7" y="302.5" width="16.300" height="9.500" rx="3" fill="url(#bb)" stroke="#26508f" stroke-width="1.100"/>
<rect x="860.6" y="339.5" width="16.300" height="9.500" rx="3" fill="url(#bb)" stroke="#26508f" stroke-width="1.100"/>
<rect x="877.4" y="377.5" width="16.300" height="9.500" rx="3" fill="url(#bb)" stroke="#26508f" stroke-width="1.100"/>
<rect x="894.3" y="397" width="16.300" height="9.500" rx="3" fill="url(#bb)" stroke="#26508f" stroke-width="1.100"/>
<rect x="944.9" y="452.5" width="16.300" height="9.500" rx="3" fill="url(#bb)" stroke="#26508f" stroke-width="1.100"/>
<rect x="961.7" y="509.5" width="16.300" height="9.500" rx="3" fill="url(#bb)" stroke="#26508f" stroke-width="1.100"/>
<rect x="978.6" y="547" width="16.300" height="9.500" rx="3" fill="url(#bb)" stroke="#26508f" stroke-width="1.100"/>
<rect x="995.5" y="585" width="16.300" height="9.500" rx="3" fill="url(#bb)" stroke="#26508f" stroke-width="1.100"/>
<path d="M859.9 307.5 h2 q2 0 2 2 V336.5" fill="none" stroke="#334f75" stroke-width="1.300"/>
<path d="M859.9 334.5 h8 l-4 5z" fill="#334f75"/>
<path d="M876.7 344.5 h2 q2 0 2 2 V374.5" fill="none" stroke="#334f75" stroke-width="1.300"/>
<path d="M876.7 372.5 h8 l-4 5z" fill="#334f75"/>
<path d="M893.6 382.5 h2 q2 0 2 2 V394" fill="none" stroke="#334f75" stroke-width="1.300"/>
<path d="M893.6 392 h8 l-4 5z" fill="#334f75"/>
<path d="M977.9 514.5 h2 q2 0 2 2 V544" fill="none" stroke="#334f75" stroke-width="1.300"/>
<path d="M977.9 542 h8 l-4 5z" fill="#334f75"/>
<path d="M994.8 552 h2 q2 0 2 2 V582" fill="none" stroke="#334f75" stroke-width="1.300"/>
<path d="M994.8 580 h8 l-4 5z" fill="#334f75"/>
<path d="M910.5 401.800 H943.500 q2 0 2 2 V449" fill="none" stroke="#334f75" stroke-width="1.300"/>
<path d="M941.500 447.500 h8 l-4 5z" fill="#334f75"/>
<path d="M966 266.500 h2 q2.500 0 2.500 2.500 V295 q0 2.500 -2.500 2.500 H951 q-2.500 0 -2.500 2.500 V489 q0 2.500 2.500 2.500 h1" fill="none" stroke="#2b2b2b" stroke-width="1.300"/>
<path d="M952 488 v7.500 l4.500 -3.750z" fill="#111"/>
</svg>
<div class="a" style="left:1104px;top:211px;width:16px;height:462px;background:#e4e7ec;border-left:1px solid #cfd4da"></div>
<div class="a" style="left:1104px;top:211px;width:16px;height:15px;background:#dcdfe3"></div>
<svg class="a" style="left:1108px;top:216px" width="9" height="5"><path d="M0 4.500 l4.500 -4.500 l4.500 4.500z" fill="#333"/></svg>
<div class="a" style="left:1105px;top:226px;width:14px;height:14px;background:#f3f5f8;border:1px solid #aab2bd"></div>
<div class="a" style="left:1108px;top:230px;width:8px;height:1px;background:#777;box-shadow:0 2px 0 #777,0 4px 0 #777"></div>
<svg class="a" style="left:1108px;top:664px" width="9" height="5"><path d="M0 0 h9 l-4.500 4.500z" fill="#333"/></svg>

<!-- horizontal scrollbars -->
<div class="a" style="left:183px;top:673px;width:937px;height:18px;background:linear-gradient(#e9ecf1,#e1e5eb)"></div>
<div class="a" style="left:754px;top:673px;width:6px;height:18px;background:linear-gradient(90deg,#b9c0c9,#e4e8ed 2px,#e4e8ed 4px,#b9c0c9)"></div>
<div class="a" style="left:1104px;top:673px;width:16px;height:18px;background:#d5dae1"></div>
<svg class="a" style="left:184px;top:674px" width="922" height="16" viewBox="184 674 922 16">
  <path d="M193 677.500 v9 l-5 -4.500z M744 677.500 v9 l5 -4.500z M770 677.500 v9 l-5 -4.500z M1095 677.500 v9 l5 -4.500z" fill="#333"/>
  <rect x="330.500" y="674.500" width="15" height="14" rx="2" fill="#f6f8fa" stroke="#9aa3af"/>
  <path d="M335.500 678 v7 M337.500 678 v7 M339.500 678 v7 M341.500 678 v7" stroke="#8a929d" stroke-width="1"/>
  <rect x="776.500" y="674.500" width="15" height="14" rx="2" fill="#f6f8fa" stroke="#9aa3af"/>
  <path d="M781.500 678 v7 M783.500 678 v7 M785.500 678 v7 M787.500 678 v7" stroke="#8a929d" stroke-width="1"/>
</svg>
<!-- status bar -->
<div class="a" style="left:160px;top:691px;width:960px;height:21px;background:linear-gradient(#e3e9f1,#d3dbe7 50%,#c8d2e0);border-top:1px solid #aab3c0"></div>
<div class="a" style="left:160px;top:712px;width:960px;height:7px;background:linear-gradient(#9fb0c8,#c9d8eb 2px,#bccce2 4px,#6f8199 6px,#39414d)"></div>
<div class="a" style="left:160px;top:1px;width:2px;height:718px;background:linear-gradient(90deg,#7f8da0,#cfdcec)"></div>
<div class="t" style="left:170px;top:697px;font-size:11px;letter-spacing:-0.2px;color:#3a3f47">Ready</div>
<div class="a" style="left:207px;top:694px;width:1px;height:17px;background:#a9b3c1;box-shadow:1px 0 0 #f2f5f9"></div>
<svg class="a" style="left:226px;top:694px" width="16" height="16" viewBox="0 0 16 16"><path d="M2 15 l4 -5" stroke="#8d949c" stroke-width="1.100"/><path d="M3 8 l4 -1 l2 -4 l5 4 l-4 2 l-1 4z" fill="#2fb6c4" stroke="#168a99" stroke-width="0.800"/></svg>
<div class="t" style="left:246px;top:697px;font-size:11px;letter-spacing:-0.2px;color:#3a3f47">New Tasks : Manually Scheduled</div>
<div class="a" style="left:410px;top:694px;width:1px;height:17px;background:#a9b3c1;box-shadow:1px 0 0 #f2f5f9"></div>
<svg class="a" style="left:900px;top:692px" width="220" height="21" viewBox="900 692 220 21">
  <rect x="908.500" y="693.500" width="18" height="18" rx="2" fill="#fbd36a" stroke="#e0a93a"/>
  <rect x="911.500" y="696.500" width="12" height="11" fill="#fdfdfd" stroke="#555"/><path d="M912 699.500 h11" stroke="#555"/><rect x="914" y="701" width="4" height="2" fill="#333"/><rect x="917" y="704" width="4" height="2" fill="#333"/>
  <rect x="928.500" y="696.500" width="12" height="11" fill="#fdfdfd" stroke="#666"/><path d="M929 699.500 h11 M929 703 h11 M932.500 697 v10 M936.500 697 v10" stroke="#777" stroke-width="0.900"/>
  <rect x="945.500" y="696.500" width="12" height="11" fill="#fdfdfd" stroke="#666"/><path d="M946 699.500 h11 M946 703.500 h11 M951.500 700 v4" stroke="#777" stroke-width="0.900"/><rect x="947" y="701" width="3" height="2" fill="#555"/><rect x="953" y="701" width="3" height="2" fill="#555"/>
  <rect x="962.500" y="696.500" width="12" height="11" fill="#fdfdfd" stroke="#666"/><path d="M963 700.500 h11 M963 704 h11 M966.500 697 v10 M970.500 697 v10" stroke="#777" stroke-width="0.900"/>
  <circle cx="987" cy="702.500" r="6.500" fill="#f3f5f8" stroke="#7d8794"/><path d="M983.500 702.500 h7" stroke="#333" stroke-width="1.600"/>
  <path d="M996 702.500 h92" stroke="#8f99a6" stroke-width="1"/><path d="M1041.500 699 v7" stroke="#8f99a6"/>
  <path d="M1055.500 696.500 h7 v8 l-3.500 3.500 l-3.500 -3.500z" fill="#f1f3f6" stroke="#6d7682"/>
  <circle cx="1095" cy="702.500" r="6.500" fill="#f3f5f8" stroke="#7d8794"/><path d="M1091.500 702.500 h7 M1095 699 v7" stroke="#333" stroke-width="1.600"/>
  <path d="M1117 711 l1 -1 M1113 711 l5 -5 M1109 711 l9 -9" stroke="#9aa6b6" stroke-width="1" stroke-dasharray="1 1.500"/>
</svg>

</body></html>
